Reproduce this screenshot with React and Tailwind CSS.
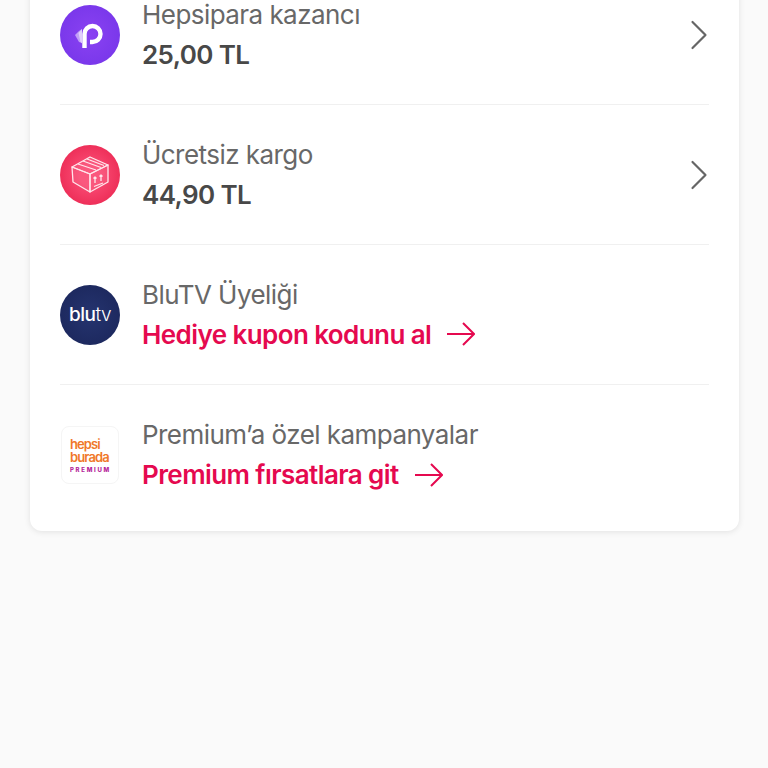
import { ChevronRight } from 'lucide-react'

const font = { fontFamily: 'Inter, "Liberation Sans", sans-serif' }

function HepsiparaIcon() {
  return (
    <div className="w-[60px] h-[60px] rounded-full bg-[radial-gradient(circle,#8a42f2,#7434e8)] shrink-0">
      <svg width="60" height="60" viewBox="0 0 60 60" fill="none">
        <path d="M15 30 L19 26 L22 24 L22 38 L19 37 Z" fill="#fff" opacity="0.5" />
        <path d="M18.500 28 L22 24 L22 38.500 L20.500 37 Z" fill="#fff" opacity="0.5" />
        <path d="M24.500 43 V29 a8 8 0 1 1 8 8 h-2.500" stroke="#fff" strokeWidth="4.400" />
      </svg>
    </div>
  )
}

function KargoIcon() {
  return (
    <div className="w-[60px] h-[60px] rounded-full bg-[radial-gradient(circle,#f94a73_25%,#e71f49)] flex items-center justify-center shrink-0">
      <svg width="38" height="38" viewBox="-1 -1 38 38" fill="#ff8fa8" fillOpacity="0.2" stroke="#ffe6ec" strokeWidth="1.300" strokeLinejoin="round">
        <path d="M0 10 L18 0 L36 8 L18 17 Z" />
        <path d="M0 10 L1 25 L18 35 L18 17 Z" />
        <path d="M18 17 L36 8 L36 25 L18 35 Z" />
        <path d="M6 7 L24 13 M11 4 L29 10.500 M15 2 L32 8.500" fill="none" />
        <path d="M23 26 V20 M21.500 21.500 L23 20 L24.500 21.500 M29 24 V18 M27.500 19.500 L29 18 L30.500 19.500 M22 29.500 L31 26" fill="none" />
      </svg>
    </div>
  )
}

function BluIcon() {
  return (
    <div className="w-[60px] h-[60px] rounded-full bg-[radial-gradient(circle,#25346f,#1a2559)] flex items-center justify-center shrink-0">
      <span className="text-white text-[19px] leading-none tracking-[-0.5px] font-medium">
        blu<span className="font-light">tv</span>
      </span>
    </div>
  )
}

function PremiumIcon() {
  return (
    <div className="w-[58px] h-[58px] mx-px rounded-lg bg-white border border-[#f5f5f5] flex flex-col justify-center pl-[8px] shrink-0">
      <span className="w-[44px] block text-[#f0782a] text-[13px] leading-[13px] font-semibold tracking-[-0.9px]">hepsi burada</span>
      <span className="text-[#b5249a] text-[6px] leading-[6px] mt-[3px] font-extrabold tracking-[1.7px]">PREMIUM</span>
    </div>
  )
}

function LinkArrow() {
  return (
    <svg className="ml-[16px]" width="28" height="24" viewBox="0 0 28 24" fill="none" stroke="currentColor" strokeWidth="2">
      <path d="M0 12 H27 M16 1 L27 12 L16 23" />
    </svg>
  )
}

function Row({ icon, title, value, link, last }) {
  return (
    <div className={`h-[140px] flex items-center ${last ? '' : 'border-b border-[#f0f0f0]'}`}>
      {icon}
      <div className="ml-[22px] pb-[1px] flex-1 flex flex-col gap-[9px]">
        <p className="text-[26px] leading-[31px] text-[#686868] tracking-[-0.55px]">{title}</p>
        {value && <p className="text-[26px] leading-[31px] font-semibold text-[#484848] tracking-[-0.6px]">{value}</p>}
        {link && (
          <p className="flex items-center text-[26px] leading-[31px] font-semibold text-[#e5094f] tracking-[-0.58px]">
            {link}
            <LinkArrow />
          </p>
        )}
      </div>
      {value && <ChevronRight className="text-[#666] mr-[-16px]" size={52} strokeWidth={1} />}
    </div>
  )
}

export default function App() {
  return (
    <div className="h-[768px] overflow-hidden bg-[#fafafa]" style={font}>
      <div className="ml-[30px] mr-[29px] mt-[-35px] px-[30px] pb-[6px] bg-white rounded-b-xl shadow-[0_1px_6px_rgba(0,0,0,0.1)]">
        <Row icon={<HepsiparaIcon />} title="Hepsipara kazancı" value="25,00 TL" />
        <Row icon={<KargoIcon />} title="Ücretsiz kargo" value="44,90 TL" />
        <Row icon={<BluIcon />} title="BluTV Üyeliği" link="Hediye kupon kodunu al" />
        <Row icon={<PremiumIcon />} title="Premium’a özel kampanyalar" link="Premium fırsatlara git" last />
      </div>
    </div>
  )
}
